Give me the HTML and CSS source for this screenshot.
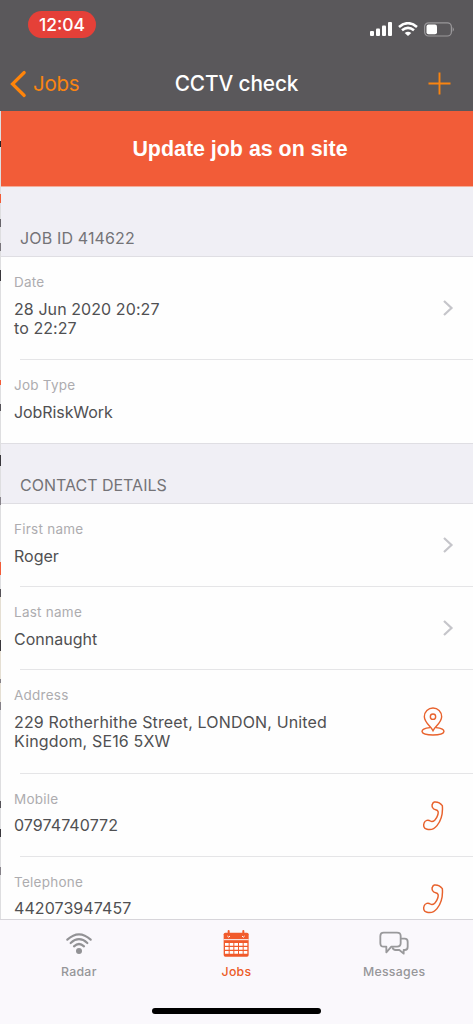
FILE: index.html
```
<!DOCTYPE html>
<html lang="en">
<head>
<meta charset="utf-8">
<title>CCTV check</title>
<link rel="stylesheet" href="styles.css">
</head>
<body>
<svg width="0" height="0" class="defs">
  <symbol id="chevron" viewBox="0 0 12 18"><path d="M2 2l7.500 7L2 16" fill="none" stroke="#c5c5ca" stroke-width="2.200"/></symbol>
  <symbol id="phone" viewBox="0 0 69 93"><path d="M37 6C46 5 55 9 61 17C63 39 58 60 45 77C37 87 25 91 13 87C5 85 4 76 6 70C9 60 19 59 25 63C34 69 44 56 47 46C50 36 49 31 41 29C31 27 29 19 31 13C32 9 34 7 37 6Z" fill="none" stroke="#e8622d" stroke-width="4.400"/></symbol>
</svg>
<div class="phone">
  <header class="top">
    <div class="status">
      <span class="clock">12:04</span>
      <div class="indicators">
        <svg width="22" height="14" viewBox="0 0 22 14" fill="#fff"><rect x="0" y="9" width="4" height="5" rx="1"/><rect x="6" y="6.500" width="4" height="7.500" rx="1"/><rect x="12" y="3.500" width="4" height="10.500" rx="1"/><rect x="18" y="0" width="4" height="14" rx="1"/></svg>
        <svg width="20" height="14" viewBox="0 0 20 14"><g fill="none" stroke="#fff" stroke-width="2.600"><path d="M1 5Q10-2.600 19 5"/><path d="M4 8.300Q10 3.400 16 8.300"/></g><path d="M6.700 11Q10 8.300 13.300 11L10 14Z" fill="#fff"/></svg>
        <svg width="31" height="15" viewBox="0 0 31 15"><rect x=".6" y=".8" width="26.800" height="13.200" rx="4" fill="none" stroke="#99979a" stroke-width="1.200"/><rect x="2.500" y="2.600" width="10.500" height="9.600" rx="2" fill="#fff"/><path d="M28.600 5Q31.200 7.400 28.600 9.800Z" fill="#99979a"/></svg>
      </div>
    </div>
    <nav class="nav">
      <a class="back"><svg width="17" height="28" viewBox="0 0 17 28"><path d="M14.200 2.500L2.500 14L14.200 25.500" fill="none" stroke="#ff840a" stroke-width="3.200" stroke-linecap="round" stroke-linejoin="miter"/></svg><span>Jobs</span></a>
      <h1>CCTV check</h1>
      <svg class="add" width="23" height="23" viewBox="0 0 23 23"><path d="M11.500.5v22M.5 11.500h22" stroke="#f98411" stroke-width="1.900"/></svg>
    </nav>
  </header>
  <main class="body">
    <button class="update">Update job as on site</button>
    <h2 class="first">JOB ID 414622</h2>
    <section>
      <div class="row tall"><div class="cell"><label>Date</label><p class="wide">28 Jun 2020 20:27<br>to 22:27</p></div><svg class="chev" width="12" height="18"><use href="#chevron"/></svg></div>
      <div class="row"><div class="cell"><label>Job Type</label><p class="tight">JobRiskWork</p></div></div>
    </section>
    <h2>CONTACT DETAILS</h2>
    <section>
      <div class="row"><div class="cell"><label>First name</label><p>Roger</p></div><svg class="chev" width="12" height="18"><use href="#chevron"/></svg></div>
      <div class="row"><div class="cell"><label>Last name</label><p>Connaught</p></div><svg class="chev" width="12" height="18"><use href="#chevron"/></svg></div>
      <div class="row tall address"><div class="cell"><label>Address</label><p class="wider">229 Rotherhithe Street, LONDON, United<br>Kingdom, SE16 5XW</p></div>
        <svg class="pin" width="24" height="30" viewBox="0 0 72 90"><g fill="none" stroke="#e8622d" stroke-width="4.200"><path d="M36 71C31 60 10 46 10 29A26 26 0 0 1 62 29C62 46 41 60 36 71Z"/><circle cx="36" cy="29" r="8"/><path d="M27 62C-7 65-5 84 36 84S79 65 45 62"/></g></svg></div>
      <div class="row number"><div class="cell"><label>Mobile</label><p class="wide">07974740772</p></div><svg class="call" width="23" height="31"><use href="#phone"/></svg></div>
      <div class="row number"><div class="cell"><label>Telephone</label><p class="wide">442073947457</p></div><svg class="call" width="23" height="31"><use href="#phone"/></svg></div>
    </section>
    <div class="sliver"></div>
  </main>
  <footer class="tabs">
    <a><svg width="28" height="28" viewBox="0 0 84 84"><g fill="none" stroke="#929295" stroke-width="6.500" stroke-linecap="round"><path d="M7 29Q42-3 77 29"/><path d="M17 39Q42 16 67 39"/><path d="M27 49Q42 35 57 49"/></g><circle cx="42" cy="63" r="9" fill="#929295"/></svg><span>Radar</span></a>
    <a class="on"><svg width="28" height="28" viewBox="0 0 84 84"><rect x="5" y="8" width="75" height="72" rx="5" fill="#f15a2b"/><path d="M5 29h75" stroke="#faf8fc" stroke-width="3"/><path d="M20 3v14M64 3v14" stroke="#f15a2b" stroke-width="6" stroke-linecap="round"/><path d="M16 18q4 7 8 0M60 18q4 7 8 0" fill="none" stroke="#fff" stroke-width="3"/><g stroke="#fff" stroke-width="8" stroke-dasharray="11 3"><path d="M9 43h67M9 55h67M9 67h67"/></g></svg><span>Jobs</span></a>
    <a><svg class="chat" width="30" height="28" viewBox="0 0 90 84"><g fill="none" stroke="#99999b" stroke-width="5.500" stroke-linejoin="round"><path d="M14 8H54Q65 8 65 18V40Q65 50 54 50H37L22 67V50H14Q4 50 4 40V18Q4 8 14 8Z"/><path d="M66 26H77Q86 26 86 35V51Q86 60 77 60H74V71L61 60H50Q42 60 40 52"/></g></svg><span>Messages</span></a>
    <div class="home"></div>
  </footer>
</div>
</body>
</html>
```
FILE: styles.css
```
* { box-sizing: border-box; }
body { margin: 0; font-family: Inter, "Liberation Sans", sans-serif; background: #fff; }
.defs { position: absolute; }
.phone { width: 473px; height: 1024px; display: flex; flex-direction: column; overflow: hidden; }
h1, h2, p { margin: 0; font-weight: 400; }
svg { display: block; flex: none; }

.top { height: 111px; flex: none; background: #5a585b; color: #fff; }
.status { height: 56px; display: flex; justify-content: space-between; padding: 11px 18px 0 28px; }
.clock { width: 68px; height: 27px; border-radius: 14px; background: #e54038; font-size: 17.500px; font-weight: 500; line-height: 27px; text-align: center; }
.indicators { display: flex; gap: 6px; padding-top: 11px; }
.nav { height: 55px; display: grid; grid-template-columns: 1fr auto 1fr; align-items: center; padding: 0 22px 0 10px; }
.back { display: flex; align-items: center; gap: 6px; color: #f98411; font-size: 20.500px; letter-spacing: -.3px; }
h1 { font-size: 20.800px; font-weight: 500; letter-spacing: -.1px; padding-left: 12px; }
.add { justify-self: end; }

.body { position: relative; height: 808px; flex: none; padding-left: 1px; overflow: hidden; background: #fefefe; }
.update { display: block; width: 100%; height: 76px; border: 0; border-bottom: 1px solid #f4ad99; padding: 1px 0 0 6px; background: #f25c38; color: #fff; font: bold 21.400px "Liberation Sans", sans-serif; }
h2 { height: 61px; padding: 29px 0 0 19px; background: #f0eff5; border: solid #dfdee3; border-width: 1px 0; color: #747377; font-size: 16px; line-height: 24px; }
h2.first { height: 70px; padding-top: 39px; border-top: 0; letter-spacing: .15px; }
.row { height: 83px; display: flex; justify-content: space-between; padding: 16px 19px 0 13px; position: relative; }
.row.tall { height: 103px; }
.row.address { height: 104px; }
.row + .row::before { content: ""; position: absolute; left: 19px; right: 0; top: -1px; height: 1px; background: #e5e5e7; }
label { display: block; font-size: 13.500px; line-height: 18px; letter-spacing: .25px; color: #adacaf; }
p { margin-top: 9px; font-size: 16px; line-height: 19px; color: #505052; white-space: nowrap; }
.number p { margin-top: 8px; }
.wide { letter-spacing: .08px; }
.wider { letter-spacing: .15px; }
.tight { letter-spacing: -.08px; }
.chev { margin-top: 16px; }
.tall .chev { margin-top: 26px; }
.pin { margin: 21px 9px 0 0; }
.call { margin: 10px 9px 0 0; }

/* one-pixel edge of the screen underneath */
.sliver { position: absolute; left: 0; top: 0; width: 1px; height: 100%; background: linear-gradient(#dedee0 0 30px, #252326 30px 36px, #dedee0 36px 83px, #f25c38 83px 92px, #dedee0 92px 108px, #67646a 108px 116px, #dedee0 116px 132px, #79757b 132px 140px, #dedee0 140px 159px, #39373c 159px 170px, #dedee0 170px 269px, #f25c38 269px 274px, #dedee0 274px 293px, #555258 293px 300px, #dedee0 300px 344px, #39373c 344px 355px, #dedee0 355px 386px, #858188 386px 394px, #dedee0 394px 451px, #f25c38 451px 464px, #dedee0 464px 478px, #555258 478px 486px, #e5dfd3 486px 529px, #39373c 529px 540px, #e5dfd3 540px 568px, #858188 568px 572px, #e5dfd3 572px 591px, #858188 591px 599px, #dedee0 599px 690px, #555258 690px 697px, #dedee0 697px 718px, #39373c 718px 726px, #dedee0 726px 756px, #858188 756px 764px, #dedee0 764px); }

.tabs { height: 105px; flex: none; display: grid; grid-template-columns: repeat(3, 1fr); border-top: 1px solid #d7d5da; background: #faf8fc; position: relative; }
.tabs a { display: flex; flex-direction: column; align-items: center; padding-top: 10px; color: #969699; font-size: 12.300px; font-weight: 500; letter-spacing: .3px; }
.tabs span { line-height: 18px; margin-top: 5px; }
.tabs .on { color: #ec5c28; }
.home { position: absolute; left: 152px; bottom: 10px; width: 169px; height: 6px; border-radius: 3px; background: #000; }
```
